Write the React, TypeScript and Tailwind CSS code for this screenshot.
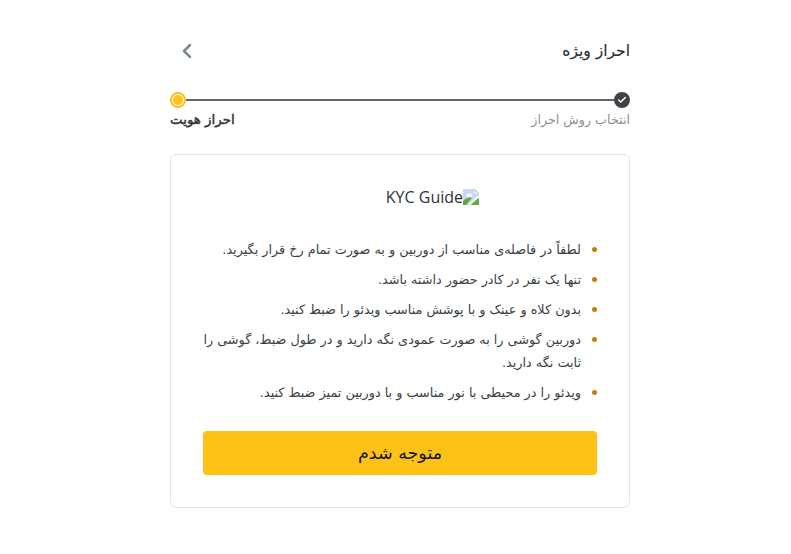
import { ChevronLeft, Check } from 'lucide-react'

const GUIDE_ITEMS = [
  'لطفاً در فاصله‌ی مناسب از دوربین و به صورت تمام رخ قرار بگیرید.',
  'تنها یک نفر در کادر حضور داشته باشد.',
  'بدون کلاه و عینک و با پوشش مناسب ویدئو را ضبط کنید.',
  'دوربین گوشی را به صورت عمودی نگه دارید و در طول ضبط، گوشی را ثابت نگه دارید.',
  'ویدئو را در محیطی با نور مناسب و با دوربین تمیز ضبط کنید.',
]

function BrokenImage() {
  return (
    <svg width="16" height="16" viewBox="0 0 16 16" className="shrink-0 mr-[1px] mb-[1px]">
      <path d="M0 0 H11 L16 5 V16 H0 Z" fill="#c9d8ee" />
      <path d="M11 0 V5 H16 Z" fill="#ececec" />
      <path d="M11 0 L16 5" stroke="#b8b8b8" />
      <path d="M3 6 Q6 3 9 5 Q10 7 7 8 H4 Z" fill="#f4f7fb" />
      <path d="M0 16 V12 Q5 7 9 9 L3 16 Z" fill="#5fa842" />
      <path d="M7 16 L15 9 L16 10 V16 Z" fill="#5fa842" />
      <path d="M16 7 L6 16" stroke="#fff" strokeWidth="2" />
    </svg>
  )
}

export default function App() {
  return (
    <div dir="rtl" className="min-h-[554px] bg-white flex justify-center pl-[9px] font-['DejaVu_Sans',sans-serif] text-[#2f3337]">
      <div className="w-[460px] pt-[39px]">
        {/* Header */}
        <div className="flex items-center justify-between h-6">
          <h1 className="text-[15.5px] font-normal leading-6 text-[#2b2f33] [-webkit-text-stroke:0.15px]">احراز ویژه</h1>
          <ChevronLeft className="w-6 h-6 ml-[5px] text-[#7b8794]" strokeWidth={2.5} />
        </div>

        {/* Stepper */}
        <div className="mt-[29px]">
          <div className="flex items-center h-4">
            <div className="w-4 h-4 rounded-full bg-[#3f4347] flex items-center justify-center shrink-0">
              <Check className="w-2.5 h-2.5 text-white" strokeWidth={3.5} />
            </div>
            <div className="flex-1 h-0.5 bg-[#63676b]" />
            <div className="w-4 h-4 rounded-full border-2 border-[#fec118] bg-white flex items-center justify-center shrink-0">
              <div className="w-2.5 h-2.5 rounded-full bg-[#fec118]" />
            </div>
          </div>
          <div className="flex justify-between mt-[2px] text-[12.7px] leading-5">
            <span className="text-[#8b9096]">انتخاب روش احراز</span>
            <span className="text-[13.4px] text-[#2f3337] [-webkit-text-stroke:0.45px]">احراز هویت</span>
          </div>
        </div>

        {/* Card */}
        <div className="mt-[24px] h-[354px] border border-[#e3e5e8] rounded-md px-8 pt-[30px]">
          <div className="w-40 mx-auto flex justify-end items-center h-6 text-base leading-6" dir="ltr">
            <span className="font-['Open_Sans',sans-serif] text-[#2f3337]">KYC Guide</span>
            <BrokenImage />
          </div>

          <ul className="mt-[29px] flex flex-col gap-[7px] text-[12.8px] leading-[23px] text-[#3a3f44]">
            {GUIDE_ITEMS.map(item => (
              <li key={item} className="flex items-start gap-[11px]">
                <span className="w-[5px] h-[5px] mt-[9px] rounded-full bg-[#c07f12] shrink-0" />
                <span>{item}</span>
              </li>
            ))}
          </ul>

          <button className="mt-[27px] w-full h-11 rounded bg-[#fec118] text-[17.5px] text-[#14171a]">
            متوجه شدم
          </button>
        </div>
      </div>
    </div>
  )
}
